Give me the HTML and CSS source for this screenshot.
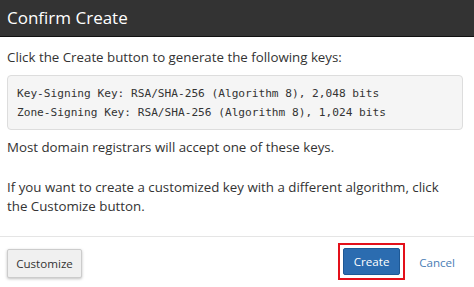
FILE: index.html
```html
<!DOCTYPE html>
<html>
<head>
<meta charset="utf-8">
<link rel="stylesheet" href="styles.css">
</head>
<body>
<div class="dialog">
  <div class="header">Confirm Create</div>
  <div class="body">
    <p class="lead">Click the Create button to generate the following keys:</p>
    <pre class="keys">Key-Signing Key: RSA/SHA-256 (Algorithm 8), 2,048 bits
Zone-Signing Key: RSA/SHA-256 (Algorithm 8), 1,024 bits</pre>
    <p class="para">Most domain registrars will accept one of these keys.</p>
    <p class="para2">If you want to create a customized key with a different algorithm, click the Customize button.</p>
  </div>
  <div class="footer">
    <button class="btn-default">Customize</button>
    <div class="right">
      <span class="highlight"><button class="btn-primary">Create</button></span>
      <a class="cancel">Cancel</a>
    </div>
  </div>
</div>
</body>
</html>
```
FILE: styles.css
```css
* { box-sizing: border-box; }
html, body { margin: 0; padding: 0; background: #fff; }
body { font-family: "Open Sans", sans-serif; color: #333; width: 474px; height: 287px; overflow: hidden; }
.dialog { display: flex; flex-direction: column; height: 287px; }
.header {
  height: 37px;
  background: #333;
  border-bottom: 1px solid #111;
  color: #fff;
  font-size: 17px;
  line-height: 35px;
  padding-left: 7px;
}
.body { padding: 0 7px 0 7px; font-size: 13.3px; line-height: 19px; flex: 1; }
.lead { margin: 11px 0 0 0; }
.keys {
  margin: 8px 4px 0 0;
  height: 55px;
  background: #f5f5f5;
  border: 1px solid #ddd;
  border-radius: 4px;
  padding: 8px 9px;
  font-family: "DejaVu Sans Mono", monospace;
  font-size: 11.15px;
  line-height: 19px;
  color: #333;
  white-space: pre;
}
.para { margin: 8px 0 0 0; }
.para2 { margin: 21px 0 0 0; max-width: 445px; }
.footer {
  border-top: 1px solid #e5e5e5;
  height: 51px;
  display: flex;
  align-items: flex-start;
  justify-content: space-between;
  padding: 12px 19px 0 7px;
}
.btn-default {
  height: 29px;
  width: 75px;
  background: #f0f0f0;
  border: 1px solid #ccc;
  border-radius: 2px;
  box-shadow: 0 1px 3px rgba(0,0,0,0.25);
  font-family: "Open Sans", sans-serif;
  font-size: 11.6px;
  color: #333;
  padding: 0;
}
.right { display: flex; align-items: flex-start; gap: 14px; }
.highlight {
  display: block;
  margin-top: -6px;
  border: 2px solid #e3101a;
  padding: 3px;
  background: #fff;
}
.btn-primary {
  display: block;
  height: 27px;
  width: 57px;
  background: #2b6cb0;
  border: 1px solid #1d5895;
  border-radius: 2px;
  color: #fff;
  font-family: "Open Sans", sans-serif;
  font-size: 11.6px;
  padding: 0;
}
.cancel { color: #4a7db5; font-size: 11.6px; line-height: 27px; }
```
